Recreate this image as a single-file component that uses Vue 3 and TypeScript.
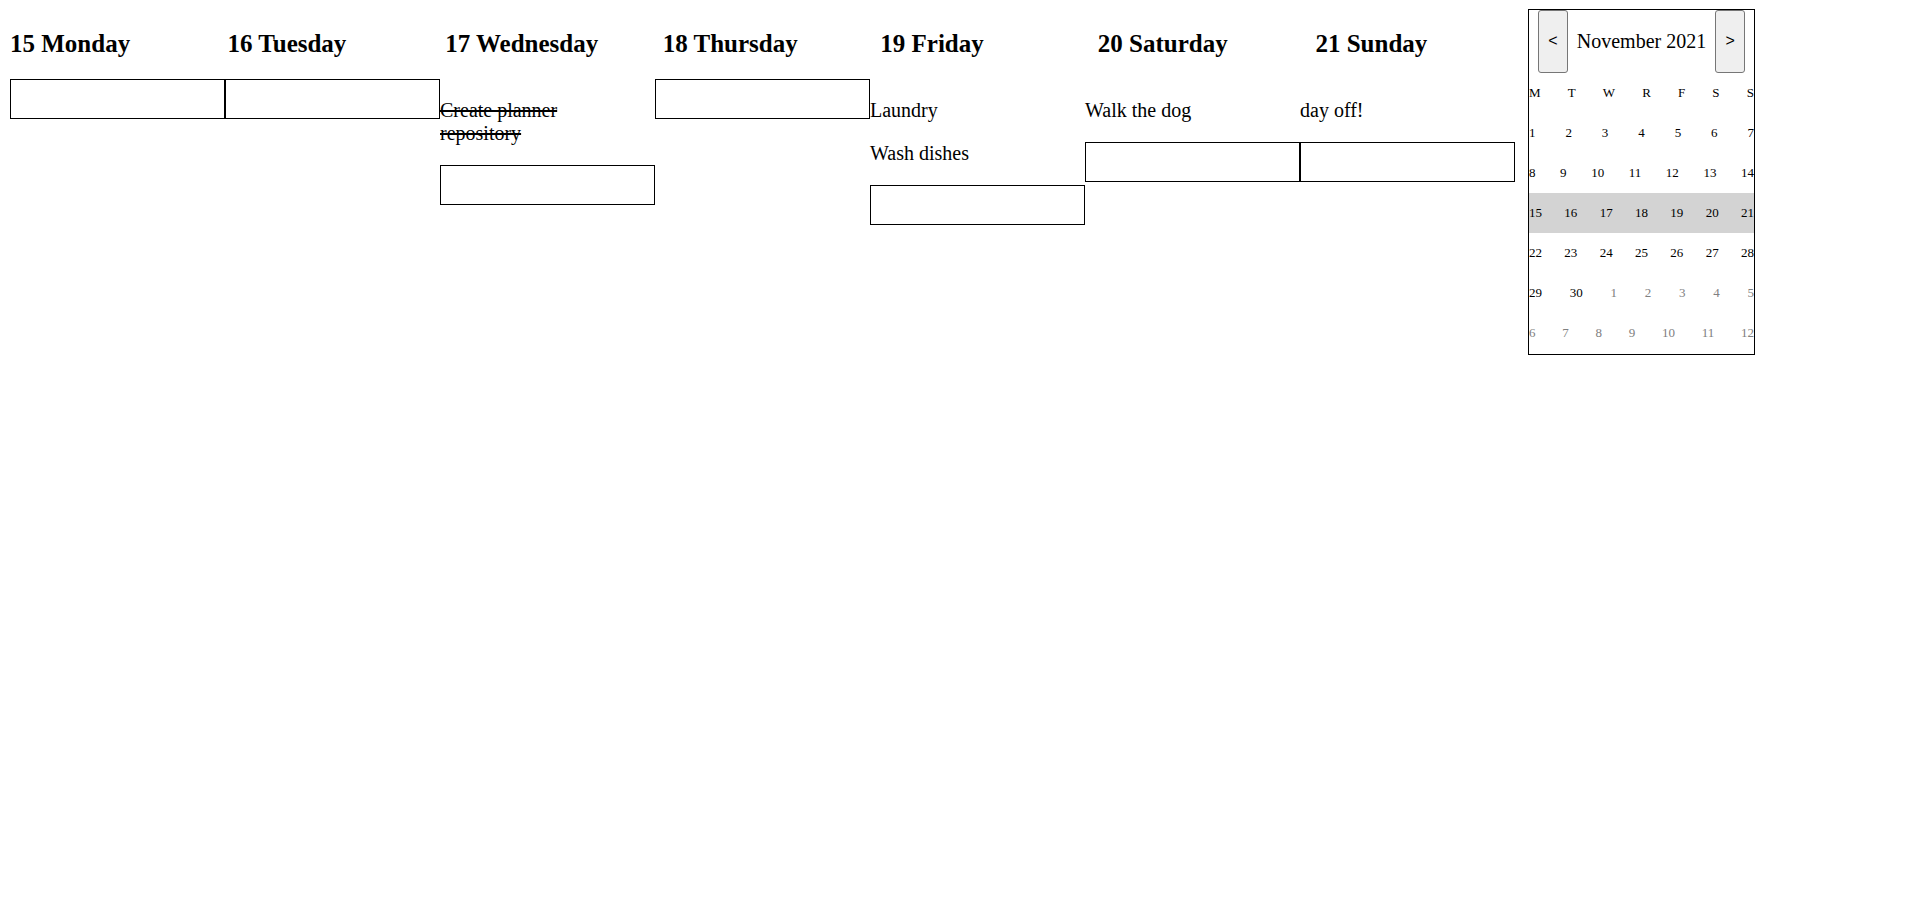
<script setup lang="ts">
import { reactive } from 'vue'

interface Task {
  text: string
  done: boolean
}

interface Day {
  date: number
  name: string
  draft: string
  tasks: Task[]
}

interface Cell {
  date: number
  outside: boolean
}

const days = reactive<Day[]>([
  { date: 15, name: 'Monday', draft: '', tasks: [] },
  { date: 16, name: 'Tuesday', draft: '', tasks: [] },
  { date: 17, name: 'Wednesday', draft: '', tasks: [{ text: 'Create planner repository', done: true }] },
  { date: 18, name: 'Thursday', draft: '', tasks: [] },
  {
    date: 19,
    name: 'Friday',
    draft: '',
    tasks: [
      { text: 'Laundry', done: false },
      { text: 'Wash dishes', done: false },
    ],
  },
  { date: 20, name: 'Saturday', draft: '', tasks: [{ text: 'Walk the dog', done: false }] },
  { date: 21, name: 'Sunday', draft: '', tasks: [{ text: 'day off!', done: false }] },
])

const weekdays = ['M', 'T', 'W', 'R', 'F', 'S', 'S']
const daysInMonth = 30
const currentWeek = 2

const weeks: Cell[][] = Array.from({ length: 6 }, (_, w) =>
  Array.from({ length: 7 }, (_, d) => {
    const n = w * 7 + d + 1
    return n > daysInMonth ? { date: n - daysInMonth, outside: true } : { date: n, outside: false }
  }),
)

function addTask(day: Day) {
  const text = day.draft.trim()
  if (!text) return
  day.tasks.push({ text, done: false })
  day.draft = ''
}
</script>

<template>
  <main class="page">
    <section class="planner">
      <header class="headings">
        <h2 v-for="day in days" :key="day.date">{{ day.date }} {{ day.name }}</h2>
      </header>
      <div class="columns">
        <div v-for="day in days" :key="day.date" class="column">
          <p
            v-for="(task, i) in day.tasks"
            :key="i"
            class="task"
            :class="{ done: task.done }"
            @click="task.done = !task.done"
          >{{ task.text }}</p>
          <input
            v-model="day.draft"
            class="entry"
            type="text"
            :aria-label="`New task for ${day.name}`"
            @keyup.enter="addTask(day)"
          >
        </div>
      </div>
    </section>

    <aside class="calendar">
      <div class="month">
        <button type="button" aria-label="Previous month">&lt;</button>
        <span>November 2021</span>
        <button type="button" aria-label="Next month">&gt;</button>
      </div>
      <table>
        <thead>
          <tr>
            <th v-for="(name, i) in weekdays" :key="i" scope="col">{{ name }}</th>
          </tr>
        </thead>
        <tbody>
          <tr v-for="(week, w) in weeks" :key="w" :class="{ current: w === currentWeek }">
            <td v-for="cell in week" :key="cell.date" :class="{ outside: cell.outside }">{{ cell.date }}</td>
          </tr>
        </tbody>
      </table>
    </aside>
  </main>
</template>

<style>
body {
  margin: 0;
  background: #fff;
}
</style>

<style scoped>
.page {
  display: grid;
  grid-template-columns: minmax(0, 1505fr) 227px minmax(0, 142fr);
  column-gap: 13px;
  align-items: start;
  padding: 9px 10px;
  font-family: "Liberation Serif", "Times New Roman", serif;
  font-size: 20px;
  line-height: 23px;
  color: #000;
}

/* The heading strip runs slightly wider than the columns below it. */
.headings {
  display: grid;
  grid-template-columns: repeat(7, minmax(0, 1fr));
  margin-right: -18px;
  padding: 20px 0;
}

h2 {
  margin: 0;
  font-size: 25px;
  font-weight: bold;
  line-height: 30px;
}

.columns {
  display: grid;
  grid-template-columns: repeat(7, minmax(0, 1fr));
  align-items: start;
}

.column {
  display: flex;
  flex-direction: column;
}

.task {
  margin: 0;
  padding: 0 32px 20px 0;
  cursor: pointer;
}

.task:first-child {
  padding-top: 20px;
}

.done {
  text-decoration: line-through 2px;
}

.entry {
  box-sizing: border-box;
  width: 100%;
  height: 40px;
  margin: 0;
  padding: 0 8px;
  border: 1px solid #000;
  border-radius: 0;
  background: #fff;
  font: inherit;
}

.calendar {
  padding-bottom: 1px;
  border: 1px solid #000;
}

.month {
  display: flex;
  justify-content: space-evenly;
  align-items: center;
}

.month span {
  white-space: nowrap;
}

.month button {
  width: 30px;
  height: 63px;
  padding: 0 0 2px;
  border: 1px solid #767676;
  border-radius: 3px;
  background: #efefef;
  color: #000;
  font-family: "Liberation Sans", Arial, sans-serif;
  font-size: 16px;
}

table,
thead,
tbody {
  display: block;
}

tr {
  display: flex;
  justify-content: space-between;
  align-items: center;
  height: 40px;
}

th,
td {
  padding: 0 0 2px;
  font-size: 13px;
  font-weight: normal;
  line-height: 15px;
}

.current {
  background: lightgray;
}

.outside {
  color: gray;
}
</style>
